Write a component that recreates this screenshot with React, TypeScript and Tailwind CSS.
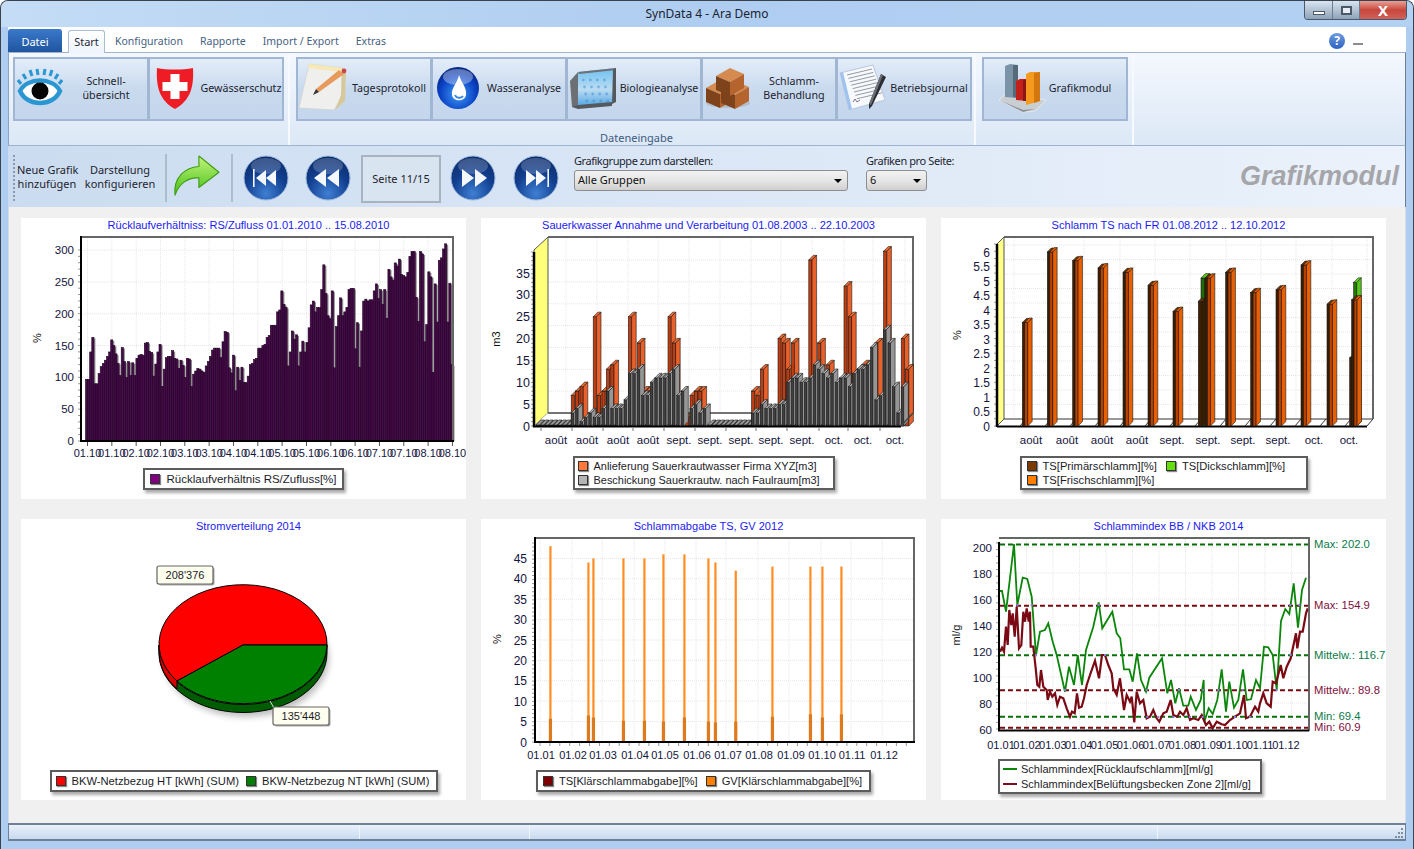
import React from "react";

const INK = "#14143c";

const z = (pts: number[][], ox: number, oy: number) =>
  pts.map(([x, y]) => `${(ox + x / 3).toFixed(1)},${(oy + y / 3).toFixed(1)}`).join(" ");

function Bar3D({ x, yb, h, w, d, front, side, top }: { x: number; yb: number; h: number; w: number; d: number; front: string; side: string; top: string }) {
  const t = yb - h;
  return (
    <g stroke="#1a1a1a" strokeWidth="0.6">
      <rect x={x} y={t} width={w} height={h} fill={front} />
      <polygon points={`${x + w},${t} ${x + w + d},${t - d} ${x + w + d},${yb - d} ${x + w},${yb}`} fill={side} />
      <polygon points={`${x},${t} ${x + d},${t - d} ${x + w + d},${t - d} ${x + w},${t}`} fill={top} />
    </g>
  );
}

function Card({ title, children, legend, legendClass }: { title: string; children: React.ReactNode; legend: React.ReactNode; legendClass?: string }) {
  return (
    <div className="flex h-[281px] w-[445px] flex-col bg-white font-['Liberation_Sans',Arial,sans-serif]">
      <div className="h-[16px] pl-[10px] text-center text-[11.05px] leading-[14px] text-[#1c1cf0]">{title}</div>
      {children}
      <div className={`mt-auto ${legendClass ?? "mb-[8px] self-center"}`}>{legend}</div>
    </div>
  );
}

function Swatch({ color }: { color: string }) {
  return <span className="inline-block h-[10px] w-[10px] border border-[#333] shadow-[1px_1px_1px_#888]" style={{ background: color }} />;
}

function LegendItem({ color, label, size }: { color: string; label: string; size?: string }) {
  return (
    <span className={`flex items-center gap-[6px] whitespace-nowrap leading-[14px] text-[#1c1c28] ${size ?? "text-[11.2px]"}`}>
      <Swatch color={color} />
      {label}
    </span>
  );
}

function LegendBox({ children, className }: { children: React.ReactNode; className?: string }) {
  return <div className={`border-2 border-[#5c5c5c] bg-white shadow-[2px_3px_3px_#aaa] ${className ?? ""}`}>{children}</div>;
}

function Grid({ xs, ys, x0, x1, y0, y1 }: { xs: number[]; ys: number[]; x0: number; x1: number; y0: number; y1: number }) {
  return (
    <g stroke="#e6e6e6" strokeWidth="1" strokeDasharray="1 1">
      {xs.map((x) => (
        <line key={`x${x}`} x1={x} x2={x} y1={y0} y2={y1} />
      ))}
      {ys.map((y) => (
        <line key={`y${y}`} x1={x0} x2={x1} y1={y} y2={y} />
      ))}
    </g>
  );
}

function YTicks({ x, y0, y1, n }: { x: number; y0: number; y1: number; n: number }) {
  const out = [] as number[];
  for (let i = 0; i <= n; i++) out.push(y0 + ((y1 - y0) * i) / n);
  return (
    <g stroke="#9a9a9a" strokeWidth="1">
      {out.map((y) => (
        <line key={y} x1={x - 3} x2={x} y1={y} y2={y} />
      ))}
    </g>
  );
}

function YLabel({ x, y, children }: { x: number; y: number; children: string }) {
  return (
    <text x={x} y={y} transform={`rotate(-90 ${x} ${y})`} textAnchor="middle" fontSize="11" fill="#111">
      {children}
    </text>
  );
}

const c1Data = [97,97,140,163,90,90,106,117,122,127,133,140,159,150,137,122,103,147,125,100,125,103,123,103,130,135,136,135,154,155,141,139,102,121,140,152,86,113,131,133,133,142,130,129,114,127,119,100,130,129,86,105,110,114,113,110,108,118,125,133,143,146,146,146,131,156,172,171,115,107,135,79,116,95,116,92,92,102,120,122,128,130,146,146,150,152,163,166,182,182,182,203,206,236,215,210,118,140,173,160,167,118,140,157,140,155,178,214,220,203,210,210,238,277,232,197,192,236,115,180,197,225,197,203,210,238,240,240,145,186,116,173,220,223,220,222,222,236,247,224,238,215,238,193,270,258,253,280,275,286,262,260,258,265,290,298,298,226,188,298,294,156,183,266,258,108,247,187,284,288,302,310,187,248,120];

function Chart1() {
  const y = (v: number) => 441 - v * 0.636;
  const labels = ["01.10","01.10","02.10","02.10","03.10","03.10","04.10","04.10","05.10","05.10","06.10","06.10","07.10","07.10","08.10","08.10"];
  const lx = labels.map((_, i) => 87.5 + i * 24.33);
  return (
    <svg className="block h-[228px] w-[445px]" viewBox="21 234 445 228">
      <Grid xs={lx} ys={[50,100,150,200,250,300].map(y)} x0={82} x1={453} y0={238} y1={440} />
      {c1Data.map((v, i) => (
        <rect key={`s${i}`} x={85.5 + i * 2.1 + 1.5} y={y(v) + 1} width={2.1} height={441 - y(v) - 1} fill="#8a8a8a" />
      ))}
      {c1Data.map((v, i) => (
        <rect key={i} x={85.5 + i * 2.1} y={y(v)} width={2.1} height={441 - y(v)} fill="#470a4a" stroke="#1e0422" strokeWidth="0.6" />
      ))}
      <polyline points="82,237 453,237 453,441" fill="none" stroke="#666" strokeWidth="2" />
      <YTicks x={81} y0={441} y1={250} n={30} />
      <line x1="81" x2="81" y1="236" y2="442" stroke="#000" strokeWidth="2" />
      <line x1="80" x2="454" y1="441" y2="441" stroke="#000" strokeWidth="2" />
      {[0,50,100,150,200,250,300].map((v) => (
        <text key={v} x="74" y={y(v) + 4} textAnchor="end" fontSize="11.5" fill={INK}>{v}</text>
      ))}
      {lx.map((x) => <line key={x} x1={x} x2={x} y1="442" y2="446" stroke="#555" />)}
      {labels.map((l, i) => (
        <text key={i} x={lx[i]} y="457" textAnchor="middle" fontSize="11" fill={INK}>{l}</text>
      ))}
      <YLabel x={41} y={338}>%</YLabel>
    </svg>
  );
}

const c2A: Record<number, number> = {8:7,9:8,10:9,13:25,14:7,15:8,16:13,17:14,21:25,23:19,24:8,25:8,30:25,31:19,34:2,35:7,36:8,37:8,49:8,50:7,51:13,55:20,56:19,57:13,58:19,62:38,64:19,66:14,70:32,71:25,72:12,73:13,74:14,77:19,79:40,83:20,84:13};
const c2B: Record<number, number> = {8:3,9:4,10:1,11:2,12:3,13:2,14:2,15:4,16:8,17:4,18:4,19:4,20:6,21:12,22:12,23:13,24:7,25:7,26:10,27:11,28:11,29:11,30:12,31:13,32:7,33:8,35:4,36:5,37:3,38:4,49:3,50:3,51:5,52:4,53:4,54:4,55:5,56:5,57:10,58:11,59:11,60:10,61:10,62:11,63:14,64:13,65:12,66:11,67:12,68:10,69:11,70:11,71:9,72:12,73:13,74:13,75:14,76:18,77:6,78:7,79:22,80:19,81:9,82:3,83:9};

function Chart2() {
  const ox = 480;
  const px = (i: number) => ox + (168 + 13.2 * i) / 3;
  const idx = Array.from({ length: 85 }, (_, i) => i);
  const labels: [string, number][] = [["août",556],["août",587],["août",618],["août",648],["sept.",679],["sept.",710],["sept.",741],["sept.",771],["sept.",802],["oct.",834],["oct.",863],["oct.",895]];
  const ty = (v: number) => 426 - v * 4.37;
  return (
    <svg className="block h-[222px] w-[445px]" viewBox="481 234 445 222">
      <Grid xs={[566,597,628,658,689,720,751,781,812,844,873,905]} ys={[5,10,15,20,25,30,35].map((v) => ty(v) - 13)} x0={549} x1={912} y0={238} y1={412} />
      <polygon points="534,250 548,237 548,413 534,426" fill="#ffff7a" stroke="#555" strokeWidth="1" />
      <polygon points="534,426 548,413 913,413 901,426" fill="#fff" />
      <line x1="548" x2="913" y1="413" y2="413" stroke="#444" strokeWidth="1.5" />
      <polyline points="548,237 913,237 913,413" fill="none" stroke="#666" strokeWidth="2" />
      {idx.filter((i) => !(i in c2A) && !(i in c2B)).map((i) => (
        <Bar3D key={`z${i}`} x={px(i)} yb={426} h={1} w={3.4} d={5} front="#444" side="#888" top="#999" />
      ))}
      {idx.filter((i) => i in c2A).map((i) => (
        <Bar3D key={`a${i}`} x={px(i)} yb={426} h={c2A[i] * 4.37} w={3.2} d={4.6} front="#bf3d12" side="#e8602a" top="#ea6a30" />
      ))}
      {idx.filter((i) => i in c2B).map((i) => (
        <Bar3D key={`b${i}`} x={px(i)} yb={426} h={c2B[i] * 4.37} w={2.5} d={4.6} front="#404040" side="#969696" top="#b4b4b4" />
      ))}
      <YTicks x={534} y0={426} y1={252} n={40} />
      <line x1="534" x2="534" y1="252" y2="427" stroke="#000" strokeWidth="2.5" />
      <line x1="533" x2="901" y1="426.5" y2="426.5" stroke="#000" strokeWidth="2" />
      <line x1="901" x2="913" y1="426" y2="413" stroke="#444" strokeWidth="1.5" />
      {[0,5,10,15,20,25,30,35].map((v) => (
        <text key={v} x="530" y={ty(v) + 4.5} textAnchor="end" fontSize="12.5" fill={INK}>{v}</text>
      ))}
      {labels.map(([l, x], i) => (
        <g key={i}>
          <line x1={x - 15} x2={x - 15} y1="428" y2="431" stroke="#777" />
          <text x={x} y="444" textAnchor="middle" fontSize="11.5" fill={INK}>{l}</text>
        </g>
      ))}
      <YLabel x={500} y={339}>m3</YLabel>
    </svg>
  );
}

const c3: [number, number][] = [[247,3.57],[322,6.0],[398,5.7],[474,5.45],[549,5.3],[624,4.85],[699,3.95],[795,5.1],[857,5.3],[932,4.6],[1008,4.7],[1083,5.55],[1161,4.2],[1235,4.35]];

function Chart3() {
  const ty = (v: number) => 426 - v * 29;
  const labels: [string, number][] = [["août",1031],["août",1067],["août",1102],["août",1137],["sept.",1172],["sept.",1208],["sept.",1243],["sept.",1278],["oct.",1314],["oct.",1349]];
  const vals = Array.from({ length: 13 }, (_, i) => i * 0.5);
  return (
    <svg className="block h-[222px] w-[445px]" viewBox="941 234 445 222">
      <Grid xs={[1014,1049,1084,1120,1155,1190,1226,1261,1296,1332,1367]} ys={vals.slice(1).map((v) => ty(v) - 7)} x0={1005} x1={1372} y0={238} y1={418} />
      <polygon points="997,244 1004,237 1004,419 997,426" fill="#ffff8a" stroke="#555" />
      <line x1="1004" x2="1373" y1="419" y2="419" stroke="#333" strokeWidth="1.2" />
      <polyline points="1004,237 1373,237 1373,419" fill="none" stroke="#666" strokeWidth="2" />
      <line x1="1367" x2="1373" y1="426" y2="419" stroke="#333" />
      <line x1="997" x2="1367" y1="426.5" y2="426.5" stroke="#000" strokeWidth="2" />
      {Array.from({ length: 14 }, (_, i) => 1020 + i * 25).map((x) => (
        <line key={x} x1={x} x2={x + 6} y1="426" y2="419" stroke="#333" strokeWidth="1" />
      ))}
      <Bar3D x={940 + 783 / 3} yb={426} h={5.1 * 29} w={4} d={4.5} front="#1f6b00" side="#56c81a" top="#56c81a" />
      <Bar3D x={940 + 775 / 3} yb={426} h={4.3 * 29} w={4} d={3} front="#3d1e00" side="#3d1e00" top="#6b3400" />
      <Bar3D x={940 + 1229 / 3} yb={426} h={2.35 * 29} w={2.5} d={2} front="#3d1e00" side="#3d1e00" top="#6b3400" />
      <Bar3D x={940 + 1235 / 3 + 2} yb={426} h={4.95 * 29} w={3} d={4.6} front="#237a00" side="#56c81a" top="#66d822" />
      {c3.map(([zx, v]) => {
        const x = 940 + zx / 3;
        return (
          <g key={zx}>
            <Bar3D x={x} yb={426} h={v * 29} w={2.4} d={4} front="#3d1e00" side="#3d1e00" top="#6b3400" />
            <Bar3D x={x + 2.4} yb={426} h={v * 29} w={3} d={4.4} front="#b84300" side="#e86000" top="#e86000" />
          </g>
        );
      })}
      <YTicks x={997} y0={426} y1={244} n={25} />
      <line x1="997" x2="997" y1="244" y2="427" stroke="#000" strokeWidth="2.5" />
      {vals.map((v) => (
        <text key={v} x="990" y={ty(v) + 4.5} textAnchor="end" fontSize="12" fill={INK}>{v}</text>
      ))}
      {labels.map(([l, x], i) => (
        <text key={i} x={x} y="444" textAnchor="middle" fontSize="11.5" fill={INK}>{l}</text>
      ))}
      <YLabel x={961} y={335}>%</YLabel>
    </svg>
  );
}

function Callout({ x, y, w, text }: { x: number; y: number; w: number; text: string }) {
  return (
    <g>
      <rect x={x + 1.5} y={y + 1.5} width={w} height={18} rx="2" fill="#aaa" />
      <rect x={x} y={y} width={w} height={18} rx="2" fill="#fffff0" stroke="#666" strokeWidth="1.2" />
      <text x={x + w / 2} y={y + 13} textAnchor="middle" fontSize="11" fill="#1c1c28">{text}</text>
    </g>
  );
}

function Chart4() {
  return (
    <svg className="block h-[222px] w-[445px]" viewBox="21 535 445 222">
      <defs>
        <filter id="pieBlur" x="-20%" y="-20%" width="140%" height="140%">
          <feGaussianBlur stdDeviation="3" />
        </filter>
      </defs>
      <ellipse cx="246" cy="658" rx="83" ry="59" fill="#888" opacity="0.55" filter="url(#pieBlur)" />
      <path d="M159,645 A84,59.5 0 0 0 327,645 L327,653 A84,59.5 0 0 1 159,653 Z" fill="#005c00" stroke="#000" strokeWidth="1" />
      <path d="M159,645 L159,653 A84,59.5 0 0 0 177,689 L177,681 A84,59.5 0 0 1 159,645 Z" fill="#d80000" stroke="#000" strokeWidth="1" />
      <path d="M243,645 L327,645 A84,59.5 0 1 0 177,681 Z" fill="#ff0000" stroke="#000" strokeWidth="1" />
      <path d="M243,645 L177,681 A84,59.5 0 0 0 327,645 Z" fill="#008000" stroke="#000" strokeWidth="1" />
      <line x1="270" y1="701" x2="274" y2="708" stroke="#ddd" strokeWidth="1" />
      <Callout x={157} y={566} w={56} text="208'376" />
      <Callout x={273} y={707} w={56} text="135'448" />
    </svg>
  );
}

const c5: [number, number, number][] = [[211,48,5.7],[325,44,6.5],[340,45,6],[430,45,5.2],[493,45,5.2],[550,46,5],[613,46,6],[685,45,5],[706,44,4.8],[767,42,5],[877,43,6.2],[991,43,6.8],[1027,43,6],[1084,43,6.8]];

function Chart5() {
  const ty = (v: number) => 742 - v * 4.08;
  const vals = [0,5,10,15,20,25,30,35,40,45];
  const lx = [541,573,603,635,665,697,728,759,791,822,852,884];
  const ll = ["01.01","01.02","01.03","01.04","01.05","01.06","01.07","01.08","01.09","01.10","01.11","01.12"];
  return (
    <svg className="block h-[228px] w-[445px]" viewBox="481 535 445 228">
      <Grid xs={[540,572,602,634,665,696,726,758,789,821,851,882]} ys={vals.slice(1).map(ty)} x0={536} x1={913} y0={539} y1={741} />
      {c5.map(([zx, v, w]) => {
        const x = 480 + zx / 3;
        return (
          <g key={zx}>
            <rect x={x - 1} y={ty(v)} width="2.2" height={742 - ty(v)} fill="#ff8e22" />
            <rect x={x - 1.5} y={ty(w)} width="3.2" height={742 - ty(w)} fill="#df7a1c" />
          </g>
        );
      })}
      <polyline points="535,538 914,538 914,742" fill="none" stroke="#666" strokeWidth="2" />
      <YTicks x={535} y0={742} y1={543} n={49} />
      <line x1="535" x2="535" y1="537" y2="743" stroke="#000" strokeWidth="2" />
      <line x1="534" x2="915" y1="742" y2="742" stroke="#000" strokeWidth="2" />
      {vals.map((v) => (
        <text key={v} x="527" y={ty(v) + 4.5} textAnchor="end" fontSize="12" fill={INK}>{v}</text>
      ))}
      {Array.from({ length: 38 }, (_, i) => 540 + i * 9.9).map((x) => (
        <line key={x} x1={x} x2={x} y1="743" y2="746" stroke="#999" />
      ))}
      {ll.map((l, i) => (
        <text key={l} x={lx[i]} y="759" textAnchor="middle" fontSize="11" fill={INK}>{l}</text>
      ))}
      <YLabel x={501} y={639}>%</YLabel>
    </svg>
  );
}

const greenLine = [[180,228],[186,228],[198,290],[222,87],[232,270],[248,188],[262,192],[275,245],[288,420],[300,350],[315,345],[325,325],[338,380],[350,420],[375,530],[387,455],[402,510],[413,420],[426,510],[438,405],[460,335],[476,262],[487,340],[517,290],[530,355],[541,370],[552,463],[568,463],[578,500],[591,415],[603,495],[618,530],[628,488],[666,430],[682,535],[693,495],[706,565],[717,520],[730,572],[745,572],[752,545],[768,585],[782,555],[791,495],[793,620],[806,580],[818,597],[832,555],[845,463],[858,590],[868,500],[882,578],[895,555],[909,463],[920,555],[933,553],[948,495],[960,520],[972,395],[985,397],[998,420],[1010,525],[1023,318],[1036,282],[1048,297],[1061,205],[1074,338],[1086,225],[1098,188]];
const redLine = [[180,410],[186,398],[192,410],[198,335],[203,390],[208,285],[214,330],[218,295],[224,365],[230,275],[237,400],[244,390],[250,290],[255,320],[260,280],[266,320],[270,290],[272,395],[280,395],[287,460],[292,510],[298,515],[303,465],[310,515],[320,525],[323,555],[330,530],[337,545],[345,535],[352,570],[360,545],[370,550],[380,580],[390,605],[396,590],[404,595],[411,535],[417,578],[425,575],[432,550],[440,510],[450,480],[465,437],[477,490],[486,420],[495,420],[505,450],[515,475],[520,520],[530,540],[540,490],[552,585],[560,540],[570,560],[575,545],[583,622],[590,530],[600,565],[610,555],[620,610],[630,605],[640,585],[650,610],[658,620],[670,595],[680,590],[692,555],[700,600],[712,605],[720,590],[730,600],[740,580],[750,615],[760,610],[775,615],[785,600],[798,630],[808,620],[818,640],[830,620],[845,628],[855,630],[870,615],[885,605],[900,595],[912,540],[918,610],[930,605],[945,575],[955,590],[960,565],[970,535],[980,565],[992,575],[998,500],[1008,505],[1022,450],[1030,490],[1040,455],[1052,430],[1068,355],[1072,400],[1080,350],[1088,350],[1098,295],[1103,280]];
const crossDots = [[232,270],[275,270],[476,270],[1050,270],[1078,270],[288,420],[495,420],[1052,420],[375,525],[620,525],[717,525],[790,525],[835,525],[908,525],[1010,525],[622,606],[655,606],[700,606],[750,606],[788,606],[885,606],[930,606]];

function Chart6() {
  const ty = (v: number) => 729 - (v - 60) * 1.3;
  const refs: [number, string, string, string][] = [
    [202, "#067006", "Max: 202.0", "#0a7a4a"],
    [154.9, "#780a12", "Max: 154.9", "#801040"],
    [116.7, "#067006", "Mittelw.: 116.7", "#0a7a4a"],
    [89.8, "#780a12", "Mittelw.: 89.8", "#801040"],
    [69.4, "#067006", "Min: 69.4", "#0a7a4a"],
    [60.9, "#780a12", "Min: 60.9", "#801040"],
  ];
  const ll = ["01.01","01.02","01.03","01.04","01.05","01.06","01.07","01.08","01.09","01.10","01.11","01.12"];
  return (
    <svg className="block h-[222px] w-[445px]" viewBox="941 535 445 222">
      <Grid xs={ll.map((_, i) => 1000 + i * 26.5)} ys={[80,100,120,140,160,180,200].map(ty)} x0={1000} x1={1308} y0={539} y1={729} />
      {refs.map(([v, c]) => (
        <line key={v} x1="1000" x2="1309" y1={ty(v)} y2={ty(v)} stroke={c} strokeWidth="2" strokeDasharray="5 3" />
      ))}
      <polyline points={z(greenLine, 940, 515)} fill="none" stroke="#0b860b" strokeWidth="1.8" />
      <polyline points={z(redLine, 940, 515)} fill="none" stroke="#7a0a14" strokeWidth="2.2" />
      {crossDots.map(([x, y], i) => (
        <rect key={i} x={940 + x / 3 - 1} y={515 + y / 3 - 1} width="2" height="2" fill="#8a7ae0" />
      ))}
      <polyline points="999,538 1309,538 1309,731" fill="none" stroke="#666" strokeWidth="2" />
      <YTicks x={999} y0={729} y1={543} n={28} />
      <line x1="999" x2="999" y1="542" y2="731" stroke="#000" strokeWidth="2" />
      <line x1="998" x2="1309" y1="730.5" y2="730.5" stroke="#000" strokeWidth="2" />
      {[60,80,100,120,140,160,180,200].map((v) => (
        <text key={v} x="992" y={ty(v) + 4.5} textAnchor="end" fontSize="11.5" fill={INK}>{v}</text>
      ))}
      {ll.map((l, i) => (
        <text key={l} x={1001 + i * 25.9} y="749" textAnchor="middle" fontSize="11" fill={INK}>{l}</text>
      ))}
      {refs.map(([v, , label, c]) => (
        <text key={label} x="1314" y={ty(v) + 3.5} fontSize="11.3" fill={c}>{label}</text>
      ))}
      <YLabel x={960} y={635}>ml/g</YLabel>
    </svg>
  );
}

function EyeIcon() {
  return (
    <svg width="46" height="42" viewBox="0 0 46 42">
      <g stroke="#2b97d2" strokeWidth="3" strokeLinecap="butt">
        <line x1="4" y1="17" x2="1" y2="13" />
        <line x1="9" y1="12" x2="6" y2="7" />
        <line x1="15" y1="9" x2="13" y2="3" />
        <line x1="21" y1="8" x2="20" y2="2" />
        <line x1="27" y1="8" x2="28" y2="2" />
        <line x1="33" y1="9" x2="35" y2="3" />
        <line x1="38" y1="12" x2="41" y2="7" />
        <line x1="42" y1="17" x2="45" y2="13" />
      </g>
      <path d="M3 24 C10 10 36 10 43 24 C36 40 10 40 3 24Z" fill="#fff" stroke="#2b97d2" strokeWidth="4.4" />
      <circle cx="23" cy="24" r="8.5" fill="#050505" />
    </svg>
  );
}

function ShieldIcon() {
  return (
    <svg width="40" height="44" viewBox="0 0 40 44">
      <path d="M2 2 C12 4 28 4 38 2 C39 20 36 34 20 43 C4 34 1 20 2 2Z" fill="#ee1c25" />
      <path d="M15.5 8h9v8h8v9h-8v8h-9v-8h-8v-9h8z" fill="#fff" />
    </svg>
  );
}

function NoteIcon() {
  return (
    <svg width="50" height="50" viewBox="0 0 50 50">
      <polygon points="11,1 44,5 44,34 36,47 1,45" fill="#efefed" stroke="#ccc" strokeWidth="0.6" />
      <polygon points="11,1 44,5 44,9 10,5" fill="#f7e9b4" />
      <polygon points="44,5 48,6 47,38 37,47 43,32" fill="#d6c89a" />
      <polygon points="41,7 46,11 21,29 18,26" fill="#e89a5c" />
      <polygon points="18,26 21,29 15,32" fill="#333" />
      <circle cx="46" cy="8" r="2.4" fill="#c9474f" />
    </svg>
  );
}

function DropIcon() {
  return (
    <svg width="44" height="44" viewBox="0 0 44 44">
      <defs>
        <radialGradient id="dropG" cx="50%" cy="65%" r="60%">
          <stop offset="0%" stopColor="#3f9cf4" />
          <stop offset="70%" stopColor="#0b43c6" />
          <stop offset="100%" stopColor="#052a8c" />
        </radialGradient>
      </defs>
      <circle cx="22" cy="22" r="21" fill="url(#dropG)" />
      <ellipse cx="22" cy="11" rx="15" ry="8" fill="#fff" opacity="0.35" />
      <path d="M23 9 C26 18 31 22 30 29 C29 36 17 36 16 29 C15 22 21 18 23 9Z" fill="#fff" />
      <path d="M19 29 C20 32 25 33 27 30" fill="none" stroke="#3a8ae8" strokeWidth="2" />
    </svg>
  );
}

function BioIcon() {
  return (
    <svg width="48" height="44" viewBox="0 0 48 44">
      <defs>
        <linearGradient id="bioG" x1="0" y1="0" x2="0" y2="1">
          <stop offset="0%" stopColor="#6cc0f0" />
          <stop offset="55%" stopColor="#bcdcf2" />
          <stop offset="100%" stopColor="#4fa3e2" />
        </linearGradient>
      </defs>
      <polygon points="9,6 47,2 47,36 9,41" fill="url(#bioG)" />
      <polygon points="1,15 9,6 9,41 3,41" fill="#6c6f73" />
      <polygon points="9,6 47,2 47,4 10,8" fill="#6d7074" />
      <polygon points="44,4 47,2 47,36 43,38" fill="#55585c" />
      <polygon points="3,41 9,39 43,36 43,40 9,43" fill="#55585c" />
      <g fill="#2f84cf" opacity="0.45">
        {[14, 21, 28, 35].map((y) => [12, 19, 26, 33].map((x) => <circle key={`${x}${y}`} cx={x + y / 6} cy={y} r="1.4" />))}
      </g>
    </svg>
  );
}

function Brick({ x, y }: { x: number; y: number }) {
  return (
    <g transform={`translate(${x} ${y})`}>
      <polygon points="0,8 14,0 28,6 14,14" fill="#d58a4f" />
      <polygon points="0,8 14,14 14,28 0,22" fill="#7f431c" />
      <polygon points="14,14 28,6 28,20 14,28" fill="#b4642c" />
    </g>
  );
}

function BricksIcon() {
  return (
    <svg width="46" height="42" viewBox="0 0 46 42">
      <ellipse cx="23" cy="36" rx="22" ry="5" fill="#999" opacity="0.4" />
      <Brick x={1} y={13} />
      <Brick x={16} y={14} />
      <Brick x={11} y={1} />
    </svg>
  );
}

function JournalIcon() {
  return (
    <svg width="48" height="48" viewBox="0 0 48 48">
      <polygon points="1,9 34,1 46,36 10,46" fill="#f7f9fc" stroke="#b9c8dc" strokeWidth="1" />
      <polygon points="1,9 4,8 13,45 10,46" fill="#9fc3ee" />
      <g stroke="#8a8f98" strokeWidth="0.9">
        {[0, 1, 2, 3, 4, 5, 6, 7].map((i) => (
          <line key={i} x1={8 + i * 1.4} y1={11 + i * 3.4} x2={33 + i * 1.4} y2={5 + i * 3.4} />
        ))}
      </g>
      <path d="M14 38 l2 -3 l2 3 l3 -2" fill="none" stroke="#555" strokeWidth="0.8" />
      <polygon points="42,10 47,13 33,42 30,45 30,40" fill="#2c2e33" />
      <polygon points="42,10 44,11 32,41 30,40" fill="#6b6f78" />
    </svg>
  );
}

function ChartIcon() {
  return (
    <svg width="50" height="50" viewBox="0 0 50 50">
      <polygon points="1,37 8,31 48,37 37,48 25,49" fill="#c9ced2" stroke="#eee" strokeWidth="0.8" />
      <polygon points="1,37 25,47 37,46 25,49" fill="#8a9196" />
      <polygon points="7,3 12,1 20,2 20,35 7,34" fill="#7b93a6" />
      <polygon points="15,2 20,2 20,35 15,34" fill="#566a7a" />
      <polygon points="18,18 22,16 30,16 30,38 18,37" fill="#c4201a" />
      <polygon points="25,17 30,16 30,38 25,38" fill="#8a1712" />
      <polygon points="28,11 32,9 42,9 42,38 28,42" fill="#f59a1e" />
      <polygon points="36,10 42,9 42,38 36,40" fill="#d4770e" />
    </svg>
  );
}

function ArrowIcon() {
  return (
    <svg width="48" height="42" viewBox="0 0 50 44">
      <defs>
        <linearGradient id="arrG" x1="0" y1="0" x2="0" y2="1">
          <stop offset="0%" stopColor="#c4f47c" />
          <stop offset="100%" stopColor="#46c016" />
        </linearGradient>
      </defs>
      <path d="M2 42 C0 24 12 13 27 12 L27 1 L48 18 L27 34 L27 24 C16 23 6 30 2 42Z" fill="url(#arrG)" stroke="#3f9e16" strokeWidth="1.2" strokeLinejoin="round" />
    </svg>
  );
}

function NavButton({ dir, edge }: { dir: "l" | "r"; edge?: boolean }) {
  const id = `nav${dir}${edge ? "e" : "n"}`;
  return (
    <svg width="46" height="46" viewBox="0 0 46 46">
      <defs>
        <radialGradient id={id} cx="50%" cy="85%" r="80%">
          <stop offset="0%" stopColor="#3f7fd2" />
          <stop offset="60%" stopColor="#123f90" />
          <stop offset="100%" stopColor="#0d2e6e" />
        </radialGradient>
      </defs>
      <circle cx="23" cy="23" r="22" fill={`url(#${id})`} stroke="#9db9dd" strokeWidth="1" />
      <ellipse cx="23" cy="11" rx="15" ry="8" fill="#fff" opacity="0.2" />
      <g fill="#f4f8fd" transform={dir === "l" ? "" : "translate(46 0) scale(-1 1)"}>
        {edge ? (
          <>
            <rect x="10" y="14" width="1.6" height="18" />
            <polygon points="13,23 23,15 23,31" />
            <polygon points="23,23 33,15 33,31" />
          </>
        ) : (
          <>
            <polygon points="9,23 21,14 21,32" />
            <polygon points="22,23 34,14 34,32" />
          </>
        )}
      </g>
    </svg>
  );
}

function RibbonButton({ icon, children, wide }: { icon: React.ReactNode; children: React.ReactNode; wide?: boolean }) {
  return (
    <div className={`-ml-[1px] flex h-[64px] items-center border-2 border-[#a1b6d3] bg-gradient-to-b from-[#e3edf9] via-[#c9daee] to-[#c4d6ec] pb-[2px] first:ml-0 ${wide ? "w-[146px]" : "w-[136px]"}`}>
      {wide ? (
        <div className="ml-[14px] -mr-[14px] flex w-[50px] shrink-0 items-center justify-center">{icon}</div>
      ) : (
        <div className="flex w-[50px] shrink-0 items-center justify-center">{icon}</div>
      )}
      <div className="flex-1 whitespace-nowrap text-center text-[10.7px] leading-[14px] text-[#1e1e2e]">{children}</div>
    </div>
  );
}

function Select({ value, className }: { value: string; className: string }) {
  return (
    <div className={`flex h-[21px] items-center justify-between rounded-[3px] border border-[#8e8e8e] bg-gradient-to-b from-[#f2f2f2] via-[#e6e6e6] to-[#cfcfcf] pl-[3px] pr-[5px] text-[11px] text-[#111] ${className}`}>
      <span>{value}</span>
      <span className="h-0 w-0 border-x-[4px] border-t-[4px] border-x-transparent border-t-black" />
    </div>
  );
}

function App() {
  return (
    <div className="relative flex h-[849px] w-[1414px] flex-col overflow-hidden rounded-t-[8px] border-t border-x border-[#39424e] bg-[#aecdf0] font-['Noto_Sans',sans-serif]">
      <header className="relative flex h-[26px] shrink-0 items-center justify-center bg-gradient-to-r from-[#c4dcf5] via-[#aecdf0] to-[#b3d1f2] text-[12px] text-[#1c2430]">
        SynData 4 - Ara Demo
        <div className="absolute right-[6px] top-0 flex h-[19px] overflow-hidden rounded-b-[4px] border border-t-0 border-[#4a5868]">
          <div className="flex w-[28px] items-end justify-center border-r border-[#6c7c8c] bg-gradient-to-b from-[#d8e4f0] to-[#8fa3b8] pb-[4px]"><span className="h-[4px] w-[12px] border border-[#4a5868] bg-white" /></div>
          <div className="flex w-[27px] items-center justify-center border-r border-[#6c7c8c] bg-gradient-to-b from-[#d8e4f0] to-[#8fa3b8]"><span className="h-[9px] w-[11px] border-2 border-[#4a5868] bg-[#e8eef5]" /></div>
          <div className="flex w-[46px] items-center justify-center bg-gradient-to-b from-[#e8a097] via-[#c8463c] to-[#d0605a] text-[15px] font-bold leading-none text-white">X</div>
        </div>
      </header>
      <div className="mx-[7px] flex min-h-0 flex-1 flex-col">
        <nav className="flex h-[25px] shrink-0 items-end bg-white text-[10.5px] text-[#46617f]">
          <div className="flex h-[23px] w-[54px] items-center justify-center rounded-t-[3px] bg-gradient-to-b from-[#3b79cb] to-[#1f559f] pt-[3px] text-[11px] text-white">Datei</div>
          <div className="relative top-[1px] ml-[6px] flex h-[23px] w-[37px] items-center justify-center rounded-t-[3px] border border-b-0 border-[#a7bdd8] bg-gradient-to-b from-white to-[#eef4fc] text-[11px] text-[#1e2a3a]">Start</div>
          <div className="ml-[10px] flex h-[22px] items-center gap-[17px] pt-[2px]">
            <span>Konfiguration</span>
            <span>Rapporte</span>
            <span>Import / Export</span>
            <span>Extras</span>
          </div>
          <div className="ml-auto mb-[3px] mr-[43px] flex h-[16px] items-center">
            <span className="flex h-[16px] w-[16px] items-center justify-center rounded-full bg-gradient-to-b from-[#6b9be0] to-[#2f62c0] text-[12px] font-bold leading-none text-white">?</span>
            <span className="ml-[8px] mt-[6px] h-[2px] w-[10px] bg-[#8b8b8b]" />
          </div>
        </nav>
        <section className="flex h-[94px] shrink-0 border-y border-[#9db3cf] border-r-[#6f7f92] border-l border-l-[#8ea5c2] border-r bg-gradient-to-b from-[#f4f8fe] to-[#dce8f6]">
          <div className="flex w-[281px] shrink-0 border-r-2 border-[#f6f9fd] pl-[4px] pt-[4px]">
            <RibbonButton icon={<EyeIcon />}>Schnell-<br />übersicht</RibbonButton>
            <RibbonButton icon={<ShieldIcon />}>Gewässerschutz</RibbonButton>
          </div>
          <div className="flex w-[686px] shrink-0 flex-col border-r-2 border-[#f6f9fd] pl-[6px] pt-[4px]">
            <div className="flex">
              <RibbonButton icon={<NoteIcon />}>Tagesprotokoll</RibbonButton>
              <RibbonButton icon={<DropIcon />}>Wasseranalyse</RibbonButton>
              <RibbonButton icon={<BioIcon />}>Biologieanalyse</RibbonButton>
              <RibbonButton icon={<BricksIcon />}>Schlamm-<br />Behandlung</RibbonButton>
              <RibbonButton icon={<JournalIcon />}>Betriebsjournal</RibbonButton>
            </div>
            <div className="mt-[10px] pl-[3px] text-center text-[11px] leading-[14px] text-[#3d5a80]">Dateneingabe</div>
          </div>
          <div className="flex w-[158px] shrink-0 border-r-2 border-[#f6f9fd] pl-[6px] pt-[4px]">
            <RibbonButton wide icon={<ChartIcon />}>Grafikmodul</RibbonButton>
          </div>
        </section>
        <section className="flex h-[61px] shrink-0 items-center border-r border-[#6f7f92] bg-gradient-to-r from-[#cbdcf0] via-[#dbe7f6] to-[#ebf2fb] text-[11px] text-[#1e1e2e]">
          <div className="ml-[5px] mt-[2px] h-[46px] w-[2px] border-l-2 border-dotted border-[#8a9bb0]" />
          <div className="ml-[2px] mt-[1px] w-[60px] whitespace-nowrap text-center leading-[14px]">Neue Grafik<br />hinzufügen</div>
          <div className="ml-[6px] mt-[1px] w-[74px] whitespace-nowrap text-center leading-[14px]">Darstellung<br />konfigurieren</div>
          <div className="ml-[8px] mt-[3px] h-[48px] w-[2px] bg-[#aebcce]" />
          <div className="ml-[6px] mt-[-2px] flex w-[58px] justify-start"><ArrowIcon /></div>
          <div className="mt-[3px] h-[48px] w-[2px] bg-[#aebcce]" />
          <div className="ml-[10px] mt-[3px]"><NavButton dir="l" edge /></div>
          <div className="ml-[16px] mt-[3px]"><NavButton dir="l" /></div>
          <div className="ml-[10px] mt-[5px] flex h-[48px] w-[80px] items-center justify-center border-2 border-[#a9b3bf] bg-[#d9e4f1] text-[11px]">Seite 11/15</div>
          <div className="ml-[9px] mt-[3px]"><NavButton dir="r" /></div>
          <div className="ml-[17px] mt-[3px]"><NavButton dir="r" edge /></div>
          <div className="ml-[15px] flex flex-col gap-[2px] self-start pt-[7px]">
            <div className="text-[11px] leading-[15px] tracking-[-0.45px]">Grafikgruppe zum darstellen:</div>
            <Select value="Alle Gruppen" className="w-[274px]" />
          </div>
          <div className="ml-[18px] flex flex-col gap-[2px] self-start pt-[7px]">
            <div className="whitespace-nowrap text-[11px] leading-[15px] tracking-[-0.4px]">Grafiken pro Seite:</div>
            <Select value="6" className="w-[61px]" />
          </div>
          <div className="ml-auto mr-[6px] font-['Liberation_Sans',Arial,sans-serif] text-[27px] font-bold italic leading-none text-[#a6a6aa]">Grafikmodul</div>
        </section>
        <main className="grid min-h-0 flex-1 grid-cols-[445px_445px_445px] content-start gap-x-[15px] gap-y-[20px] border-x border-[#d6dce4] bg-[#f0f0f0] pl-[12px] pt-[11px]">
          <Card title="Rücklaufverhältniss: RS/Zufluss 01.01.2010 .. 15.08.2010" legendClass="mb-[9px] self-center" legend={
            <LegendBox className="px-[5px] py-[2px]"><LegendItem size="text-[11.5px]" color="#800080" label="Rücklaufverhältnis RS/Zufluss[%]" /></LegendBox>
          }><Chart1 /></Card>
          <Card title="Sauerkwasser Annahme und Verarbeitung 01.08.2003 .. 22.10.2003" legendClass="mb-[9px] self-center" legend={
            <LegendBox className="w-[262px] py-[1px] pl-[3px]">
              <LegendItem size="text-[10.95px]" color="#ff7a3a" label="Anlieferung Sauerkrautwasser Firma XYZ[m3]" />
              <LegendItem size="text-[10.95px]" color="#b4b4b4" label="Beschickung Sauerkrautw. nach Faulraum[m3]" />
            </LegendBox>
          }><Chart2 /></Card>
          <Card title="Schlamm TS nach FR 01.08.2012 .. 12.10.2012" legendClass="mb-[9px] self-center" legend={
            <LegendBox className="w-[288px] px-[5px] py-[1px]">
              <div className="flex gap-[9px]">
                <LegendItem color="#7a3a00" label="TS[Primärschlamm][%]" />
                <LegendItem color="#66dd11" label="TS[Dickschlamm][%]" />
              </div>
              <LegendItem color="#ff8000" label="TS[Frischschlamm][%]" />
            </LegendBox>
          }><Chart3 /></Card>
          <Card title="Stromverteilung 2014" legend={
            <LegendBox className="flex w-[388px] gap-[7px] px-[4px] py-[2px]">
              <LegendItem color="#ff0000" label="BKW-Netzbezug HT [kWh] (SUM)" />
              <LegendItem color="#008000" label="BKW-Netzbezug NT [kWh] (SUM)" />
            </LegendBox>
          }><Chart4 /></Card>
          <Card title="Schlammabgabe TS, GV 2012" legend={
            <LegendBox className="flex w-[335px] gap-[8px] px-[5px] py-[2px]">
              <LegendItem color="#800000" label="TS[Klärschlammabgabe][%]" />
              <LegendItem color="#ff8000" label="GV[Klärschlammabgabe][%]" />
            </LegendBox>
          }><Chart5 /></Card>
          <Card title="Schlammindex BB / NKB 2014" legendClass="mb-[6px] ml-[57px] self-start" legend={
            <LegendBox className="w-[264px] px-[3px] py-[1px]">
              <div className="flex items-center gap-[4px] whitespace-nowrap text-[11px] leading-[14.5px] text-[#1c1c28]"><span className="h-[2px] w-[14px] bg-[#0b860b]" />Schlammindex[Rücklaufschlamm][ml/g]</div>
              <div className="flex items-center gap-[4px] whitespace-nowrap text-[11px] leading-[14.5px] text-[#1c1c28]"><span className="h-[2px] w-[14px] bg-[#7d0c1c]" />Schlammindex[Belüftungsbecken Zone 2][ml/g]</div>
            </LegendBox>
          }><Chart6 /></Card>
        </main>
        <footer className="flex h-[18px] shrink-0 border-y-2 border-x border-[#6f8197] bg-gradient-to-b from-[#eaf1fb] to-[#c9daef]">
          <div className="w-[351px] border-r border-[#f0f5fb]" />
          <div className="w-[170px] border-r border-[#f0f5fb]" />
          <div className="w-[628px] border-r border-[#f0f5fb]" />
          <div className="flex flex-1 items-end justify-end pb-[1px] pr-[1px]">
            <svg width="10" height="11" viewBox="0 0 10 11"><g fill="#7f8fa3"><rect x="7" y="1" width="2" height="2" /><rect x="4" y="5" width="2" height="2" /><rect x="7" y="5" width="2" height="2" /><rect x="1" y="9" width="2" height="2" /><rect x="4" y="9" width="2" height="2" /><rect x="7" y="9" width="2" height="2" /></g></svg>
          </div>
        </footer>
      </div>
      <div className="h-[8px] shrink-0" />
    </div>
  );
}

export default App;
